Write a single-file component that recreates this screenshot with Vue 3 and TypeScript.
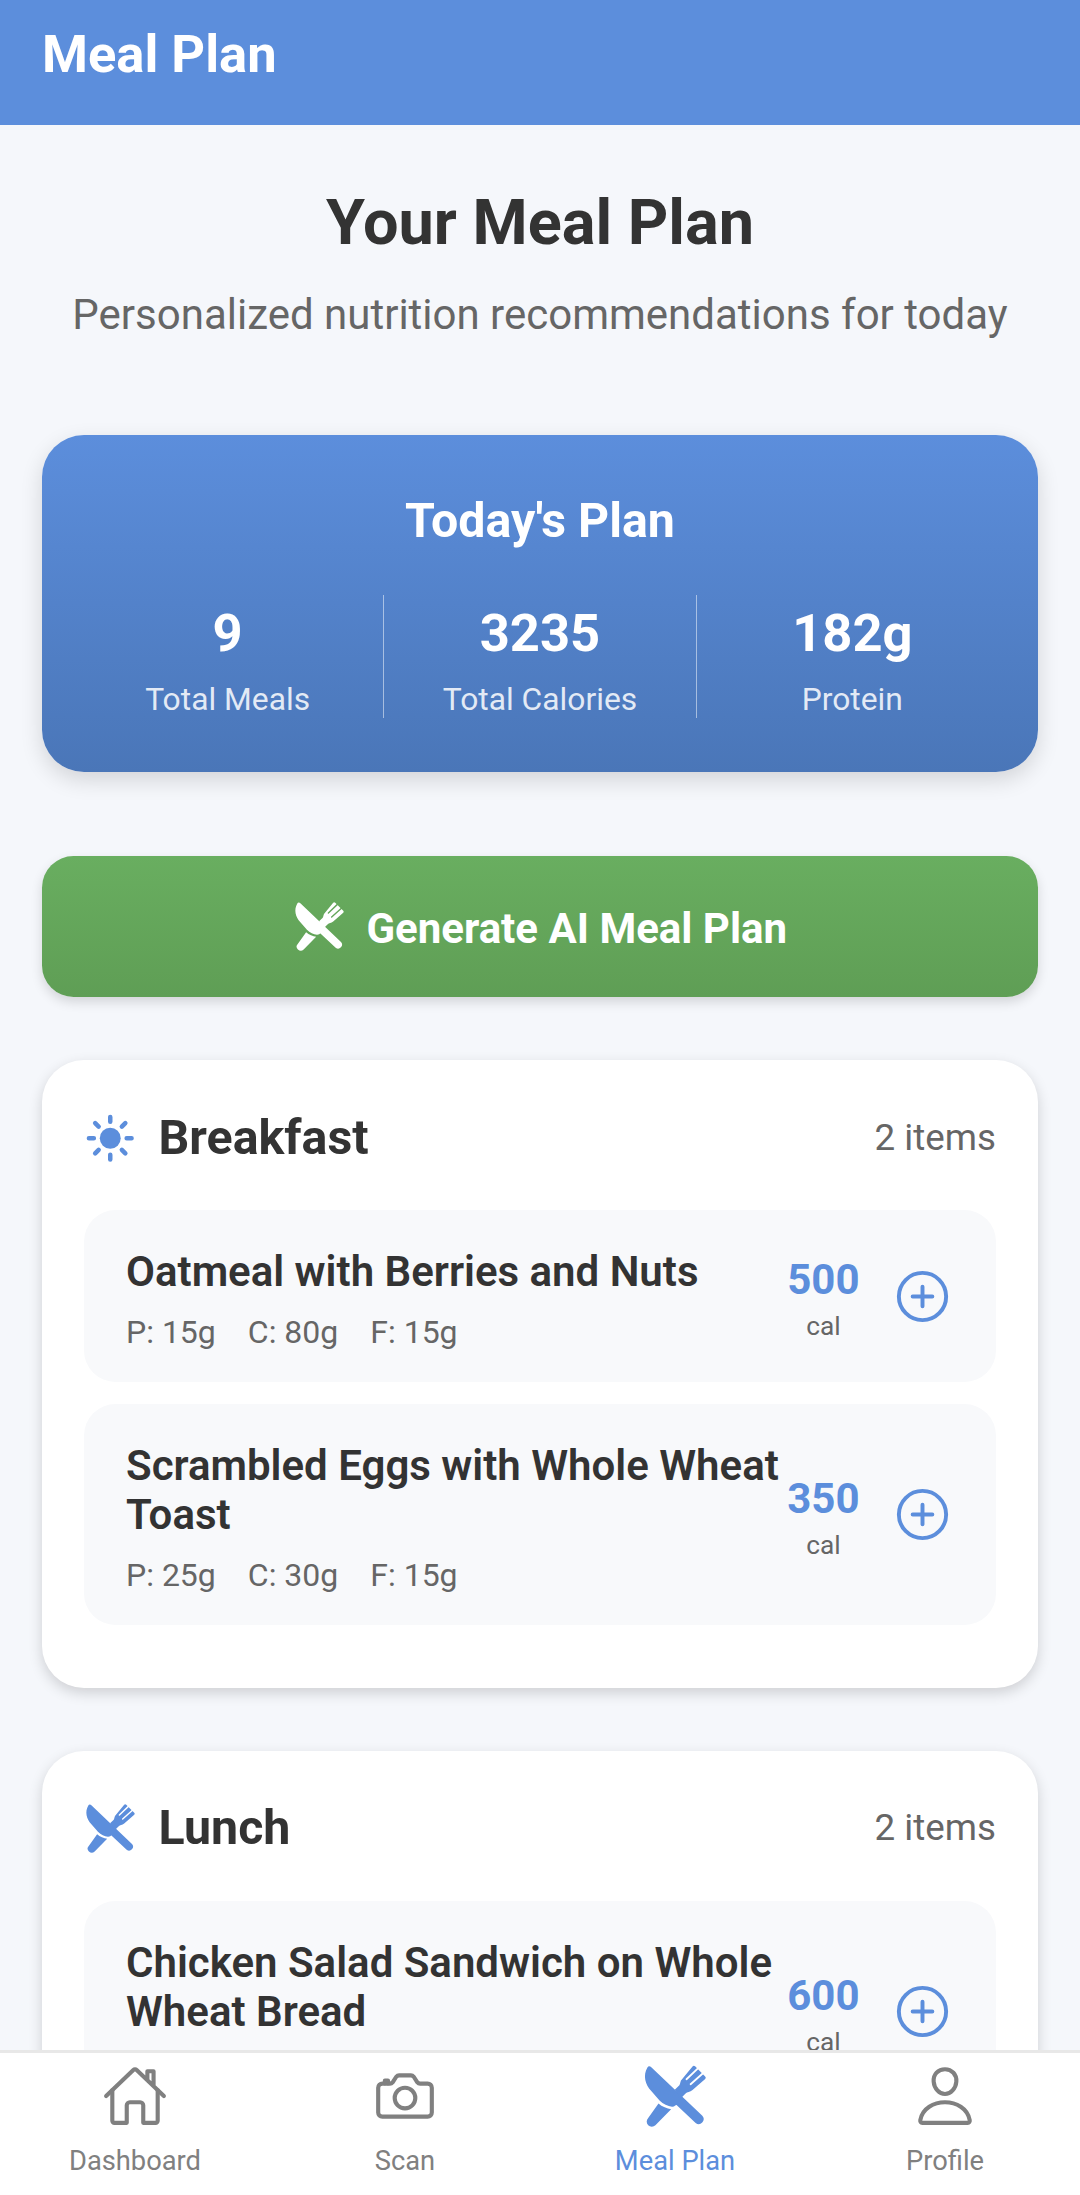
<script setup lang="ts">
interface Meal { name: string; macros: string[]; cal: number }
interface Section { title: string; icon: string; meals: Meal[] }

const sections: Section[] = [
  {
    title: 'Breakfast',
    icon: 'sun',
    meals: [
      { name: 'Oatmeal with Berries and Nuts', macros: ['P: 15g', 'C: 80g', 'F: 15g'], cal: 500 },
      { name: 'Scrambled Eggs with Whole Wheat Toast', macros: ['P: 25g', 'C: 30g', 'F: 15g'], cal: 350 },
    ],
  },
  {
    title: 'Lunch',
    icon: 'food',
    meals: [{ name: 'Chicken Salad Sandwich on Whole Wheat Bread', macros: [], cal: 600 }],
  },
]
const stats = [
  { value: '9', label: 'Total Meals' },
  { value: '3235', label: 'Total Calories' },
  { value: '182g', label: 'Protein' },
]
const tabs = [
  { label: 'Dashboard', icon: 'home', active: false },
  { label: 'Scan', icon: 'camera', active: false },
  { label: 'Meal Plan', icon: 'food', active: true },
  { label: 'Profile', icon: 'person', active: false },
]
</script>

<template>
  <div class="app">
    <svg class="defs" width="0" height="0" aria-hidden="true">
      <symbol id="i-food" viewBox="0 0 512 512">
        <path fill="currentColor" d="M42 34C48 23 62 22 72 32L468 410A38 38 0 0 1 416 465L270 328C262 320 258 340 233 339C200 335 165 318 136 290L72 218C24 165 6 96 42 34Z" />
        <path fill="currentColor" d="M128 314C155 340 195 352 226 358L104 482A38 38 0 0 1 48 426Z" />
        <path fill="currentColor" d="M254 208L290 172C300 158 294 140 312 124L392 28A14 14 0 0 1 412 26L490 104A14 14 0 0 1 490 124L392 210C372 228 352 222 336 238L300 276Z" />
        <path fill="none" stroke="var(--gap)" stroke-width="14" stroke-linecap="round" d="M345 126L448 28M377 165L486 68" />
      </symbol>
      <symbol id="i-sun" viewBox="0 0 512 512">
        <circle cx="256" cy="256" r="102" fill="currentColor" />
        <path fill="none" stroke="currentColor" stroke-width="44" stroke-linecap="round" d="M256 48v48M256 416v48M403.08 108.92l-33.94 33.94M142.86 369.14l-33.94 33.94M464 256h-48M96 256H48M403.08 403.08l-33.94-33.94M142.86 142.86l-33.94-33.94" />
      </symbol>
      <symbol id="i-add" viewBox="0 0 512 512">
        <path fill="none" stroke="currentColor" stroke-width="32" d="M448 256c0-106-86-192-192-192S64 150 64 256s86 192 192 192 192-86 192-192z" />
        <path fill="none" stroke="currentColor" stroke-width="32" stroke-linecap="round" d="M256 176v160M336 256H176" />
      </symbol>
      <symbol id="i-home" viewBox="0 0 512 512">
        <path fill="none" stroke="currentColor" stroke-width="32" stroke-linecap="round" stroke-linejoin="round" d="M80 212v236a16 16 0 0016 16h96V328a24 24 0 0124-24h80a24 24 0 0124 24v136h96a16 16 0 0016-16V212" />
        <path fill="none" stroke="currentColor" stroke-width="32" stroke-linecap="round" stroke-linejoin="round" d="M480 256L266.89 52c-5-5.28-16.69-5.34-21.78 0L32 256M400 179V64h-48v69" />
      </symbol>
      <symbol id="i-camera" viewBox="0 0 512 512">
        <path fill="none" stroke="currentColor" stroke-width="32" stroke-linecap="round" stroke-linejoin="round" d="M350.54 148.68l-26.62-42.06C318.31 100.08 310.62 96 302 96h-92c-8.62 0-16.31 4.08-21.92 10.62l-26.62 42.06C155.85 155.23 148.62 160 140 160H80a32 32 0 00-32 32v192a32 32 0 0032 32h352a32 32 0 0032-32V192a32 32 0 00-32-32h-59c-8.65 0-16.85-4.77-22.46-11.32z" />
        <circle cx="256" cy="272" r="80" fill="none" stroke="currentColor" stroke-width="32" />
        <path fill="none" stroke="currentColor" stroke-width="32" stroke-linecap="round" stroke-linejoin="round" d="M124 158v-22h-24v22" />
      </symbol>
      <symbol id="i-person" viewBox="0 0 512 512">
        <path fill="none" stroke="currentColor" stroke-width="32" stroke-linecap="round" stroke-linejoin="round" d="M344 144c-3.92 52.87-44 96-88 96s-84.15-43.12-88-96c-4-55 35-96 88-96s92 42 88 96z" />
        <path fill="none" stroke="currentColor" stroke-width="32" stroke-linejoin="round" d="M256 304c-87 0-175.3 48-191.64 138.6C62.39 453.52 68.57 464 80 464h352c11.44 0 17.62-10.48 15.65-21.4C431.3 352 343 304 256 304z" />
      </symbol>
    </svg>

    <header class="topbar">
      <h1 class="topbar-title">Meal Plan</h1>
    </header>

    <main class="content">
      <section class="intro">
        <h2 class="intro-title">Your Meal Plan</h2>
        <p class="intro-sub">Personalized nutrition recommendations for today</p>
      </section>

      <section class="summary">
        <h3 class="summary-title">Today's Plan</h3>
        <div class="stats">
          <div v-for="s in stats" :key="s.label" class="stat">
            <div class="stat-value">{{ s.value }}</div>
            <div class="stat-label">{{ s.label }}</div>
          </div>
        </div>
      </section>

      <button class="generate" type="button">
        <svg class="generate-icon"><use href="#i-food" /></svg>
        <span class="generate-text">Generate AI Meal Plan</span>
      </button>

      <section v-for="sec in sections" :key="sec.title" class="card">
        <div class="card-head">
          <svg class="card-icon"><use :href="'#i-' + sec.icon" /></svg>
          <h3 class="card-title">{{ sec.title }}</h3>
          <span class="card-count">2 items</span>
        </div>
        <div class="meals">
          <article v-for="m in sec.meals" :key="m.name" class="meal">
            <div class="meal-info">
              <div class="meal-name">{{ m.name }}</div>
              <div class="macros">
                <span v-for="x in m.macros" :key="x">{{ x }}</span>
              </div>
            </div>
            <div class="cal">
              <div class="cal-value">{{ m.cal }}</div>
              <div class="cal-unit">cal</div>
            </div>
            <svg class="add"><use href="#i-add" /></svg>
          </article>
        </div>
      </section>
    </main>

    <nav class="tabbar">
      <div v-for="t in tabs" :key="t.label" class="tab" :class="{ active: t.active }">
        <svg class="tab-icon"><use :href="'#i-' + t.icon" /></svg>
        <span class="tab-label">{{ t.label }}</span>
      </div>
    </nav>
  </div>
</template>

<style scoped>
.defs { position: absolute; }
.app {
  width: 1080px;
  height: 2195px;
  display: flex;
  flex-direction: column;
  overflow: hidden;
  background: #f5f7fb;
  color: #333;
  font-family: Roboto, "Liberation Sans", sans-serif;
  --gap: #fff;
}
.topbar {
  height: 125px;
  flex: none;
  background: #5c8edc;
  padding: 0 42px;
  box-sizing: border-box;
}
.topbar-title {
  margin: 0;
  padding-top: 24px;
  font-size: 52.5px;
  line-height: 60px;
  font-weight: 700;
  color: #fff;
}
.content {
  flex: 1;
  min-height: 0;
  overflow: hidden;
  padding: 0 42px;
}
.intro {
  padding-top: 62px;
  text-align: center;
  margin-bottom: 94px;
}
.intro-title {
  margin: 0;
  font-size: 63px;
  line-height: 72px;
  font-weight: 700;
  color: #333;
}
.intro-sub {
  margin: 30px 0 0;
  font-size: 42px;
  line-height: 52px;
  color: #666;
  white-space: nowrap;
}
.summary {
  height: 337px;
  box-sizing: border-box;
  border-radius: 42px;
  padding-top: 56px;
  background: linear-gradient(180deg, #5c8edc, #4a76b8);
  box-shadow: 0 8px 22px rgba(0, 0, 0, 0.14);
  color: #fff;
  text-align: center;
}
.summary-title {
  margin: 0;
  font-size: 48.3px;
  line-height: 60px;
  font-weight: 700;
}
.stats {
  display: flex;
  margin-top: 44px;
  padding: 0 30px;
}
.stat {
  flex: 1;
  height: 123px;
  border-right: 1px solid rgba(255, 255, 255, 0.5);
}
.stat:last-child { border-right: 0; }
.stat-value {
  font-size: 52.5px;
  line-height: 66px;
  font-weight: 700;
  padding-top: 5px;
}
.stat-label {
  font-size: 31.8px;
  line-height: 40px;
  margin-top: 13px;
  color: rgba(255, 255, 255, 0.85);
}
.generate {
  display: flex;
  align-items: center;
  justify-content: center;
  gap: 21px;
  width: 100%;
  height: 141px;
  margin-top: 84px;
  border: 0;
  border-radius: 31.5px;
  background: linear-gradient(180deg, #69ae60, #5f9e55);
  box-shadow: 0 5px 12px rgba(0, 0, 0, 0.14);
  color: #fff;
  font-family: inherit;
  font-size: 42px;
  font-weight: 700;
  --gap: #65a75b;
}
.generate-text { padding-top: 4px; }
.generate-icon { width: 52.5px; height: 52.5px; }
.card {
  margin-top: 63px;
  padding: 42px;
  padding-bottom: 63px;
  border-radius: 42px;
  background: #fff;
  box-shadow: 0 5px 14px rgba(0, 0, 0, 0.16);
}
.card-head {
  display: flex;
  align-items: center;
  height: 72px;
}
.card-icon { width: 52.5px; height: 52.5px; color: #5c8edc; flex: none; }
.card-title {
  margin: 0 0 0 22px;
  padding-bottom: 2px;
  flex: 1;
  font-size: 48.3px;
  font-weight: 700;
  color: #333;
}
.card-count { font-size: 36.75px; color: #666; padding-bottom: 2px; }
.meals {
  margin-top: 36px;
  display: flex;
  flex-direction: column;
  gap: 22px;
}
.meal {
  display: flex;
  align-items: center;
  padding: 37px 42px 31px;
  border-radius: 31.5px;
  background: #f8f9fb;
}
.meal-info { flex: 1; min-width: 0; }
.meal-name {
  font-size: 42px;
  line-height: 49.5px;
  font-weight: 600;
  color: #333;
}
.macros {
  display: flex;
  gap: 32px;
  margin-top: 17px;
  min-height: 37px;
  font-size: 32px;
  line-height: 37px;
  color: #666;
}
.cal { text-align: center; flex: none; }
.cal-value {
  font-size: 42px;
  line-height: 49px;
  font-weight: 700;
  color: #5c8edc;
}
.cal-unit {
  font-size: 26.25px;
  line-height: 31px;
  margin-top: 7px;
  color: #666;
}
.add { width: 63px; height: 63px; margin: 0 0 5px 31.5px; color: #5c8edc; flex: none; }
.tabbar {
  flex: none;
  height: 145px;
  box-sizing: border-box;
  display: flex;
  background: #fff;
  border-top: 3px solid #e8e8e8;
  position: relative;
}
.tab {
  flex: 1;
  display: flex;
  flex-direction: column;
  align-items: center;
  padding-top: 10px;
  color: #808080;
}
.tab.active { color: #5c8edc; }
.tab-icon { width: 66px; height: 66px; }
.tab-label { font-size: 27.3px; line-height: 34px; margin-top: 15px; }
</style>
